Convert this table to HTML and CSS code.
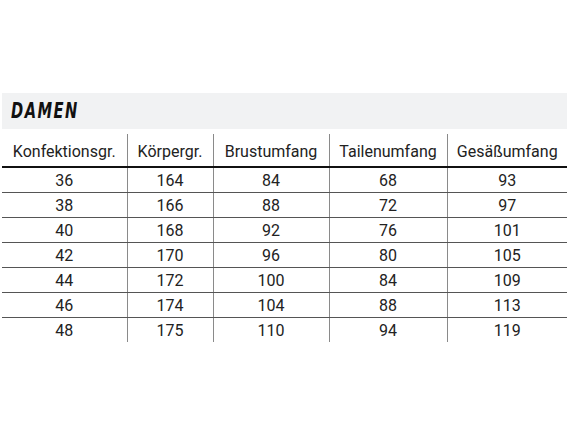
FILE: index.html
```html
<!DOCTYPE html>
<html lang="de">
<head>
<meta charset="utf-8">
<link rel="stylesheet" href="styles.css">
</head>
<body>
<div class="page">
  <div class="band"><h2 class="title">DAMEN</h2></div>
  <table class="sizes">
    <colgroup>
      <col class="c1"><col class="c2"><col class="c3"><col class="c4"><col class="c5">
    </colgroup>
    <thead>
      <tr><th>Konfektionsgr.</th><th>Körpergr.</th><th>Brustumfang</th><th>Tailenumfang</th><th>Gesäßumfang</th></tr>
    </thead>
    <tbody>
      <tr><td>36</td><td>164</td><td>84</td><td>68</td><td>93</td></tr>
      <tr><td>38</td><td>166</td><td>88</td><td>72</td><td>97</td></tr>
      <tr><td>40</td><td>168</td><td>92</td><td>76</td><td>101</td></tr>
      <tr><td>42</td><td>170</td><td>96</td><td>80</td><td>105</td></tr>
      <tr><td>44</td><td>172</td><td>100</td><td>84</td><td>109</td></tr>
      <tr><td>46</td><td>174</td><td>104</td><td>88</td><td>113</td></tr>
      <tr><td>48</td><td>175</td><td>110</td><td>94</td><td>119</td></tr>
    </tbody>
  </table>
</div>
</body>
</html>
```
FILE: styles.css
```css
html, body { margin: 0; padding: 0; background: #fff; }
.page {
  width: 565px;
  padding: 93px 0 0 2px;
  font-family: Roboto, "Liberation Sans", sans-serif;
  color: #222;
}
.band {
  height: 36px;
  background: #f1f2f3;
  display: flex;
  align-items: center;
  padding-left: 9px;
}
.title {
  margin: 0;
  font-family: "DejaVu Sans Condensed", "DejaVu Sans", sans-serif;
  font-weight: bold;
  font-style: italic;
  font-size: 22px;
  letter-spacing: 2px;
  color: #111;
  line-height: 1;
  transform: scaleX(0.74);
  transform-origin: left center;
}
.sizes {
  margin-top: 5px;
  width: 565px;
  border-collapse: collapse;
  table-layout: fixed;
  font-size: 16px;
}
.c1 { width: 125px; }
.c2 { width: 86px; }
.c3 { width: 116px; }
.c4 { width: 118px; }
.c5 { width: 120px; }
.sizes th, .sizes td {
  padding: 0;
  text-align: center;
  font-weight: normal;
  border-left: 1px solid #8a8a8a;
}
.sizes th:first-child, .sizes td:first-child { border-left: none; }
.sizes th {
  height: 30px;
  border-bottom: 2px solid #111;
  padding-top: 2px;
  color: #222;
}
.sizes td {
  height: 24px;
  border-bottom: 1px solid #555;
}
.sizes tr:last-child td { border-bottom: none; }
```
